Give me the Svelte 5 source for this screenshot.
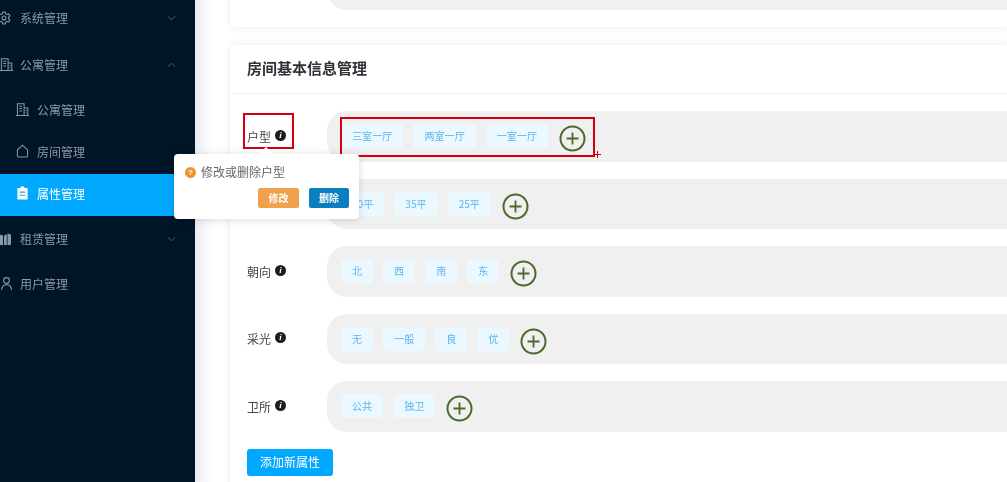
<script>
	const rows = [
		{ label: '户型', tags: ['三室一厅', '两室一厅', '一室一厅'] },
		{ label: '面积', tags: ['40平', '35平', '25平'] },
		{ label: '朝向', tags: ['北', '西', '南', '东'] },
		{ label: '采光', tags: ['无', '一般', '良', '优'] },
		{ label: '卫所', tags: ['公共', '独卫'] }
	]
</script>

{#snippet chevron(up)}
	<svg class="chev" viewBox="0 0 10 6" width="9" height="6" fill="none" stroke="currentColor" stroke-width="1">
		<path d={up ? 'M1 5l4-4 4 4' : 'M1 1l4 4 4-4'} />
	</svg>
{/snippet}

{#snippet building()}
	<svg class="ico" viewBox="0 0 14 14" width="13" height="13" fill="none" stroke="currentColor" stroke-width="1.100">
		<path d="M1.500 13.500V.8h7.200v12.700M8.700 5.500h4v8M0 13.500h14M3.500 3.500h3M3.500 6h3M3.500 8.500h3M10.300 8h1M10.300 10.500h1" />
	</svg>
{/snippet}

{#snippet addBtn()}
	<button class="add" aria-label="添加">
		<svg viewBox="0 0 27 27" width="27" height="27" fill="none" stroke="#4a6a2c">
			<circle cx="13.5" cy="13.5" r="12" stroke-width="2" />
			<path d="M13.5 7.5v12M7.5 13.5h12" stroke-width="1.8" />
		</svg>
	</button>
{/snippet}

<div class="page">
	<aside class="sidebar">
		<div class="item first">
			<svg class="ico gear" viewBox="0 0 14 14" width="14" height="14" fill="none" stroke="currentColor" stroke-width="1.100">
				<path d="M5.800 1h2.400l.4 1.700 1.400.8 1.700-.5 1.200 2-1.300 1.200v1.600l1.300 1.200-1.200 2-1.700-.5-1.400.8-.4 1.700H5.800l-.4-1.700-1.400-.8-1.700.5-1.200-2 1.300-1.200V6.200L1.100 5l1.200-2 1.700.5 1.400-.8z" />
				<circle cx="7" cy="7" r="2" />
			</svg>
			<span>系统管理</span>
			{@render chevron(false)}
		</div>
		<div class="item open">
			{@render building()}
			<span>公寓管理</span>
			{@render chevron(true)}
		</div>
		<div class="sub">
			{@render building()}
			<span>公寓管理</span>
		</div>
		<div class="sub">
			<svg class="ico" viewBox="0 0 14 14" width="13" height="14" fill="none" stroke="currentColor" stroke-width="1.100">
				<path d="M1.500 5.800L7 .8l5.500 5v6.700q0 1-1 1h-9q-1 0-1-1z" />
			</svg>
			<span>房间管理</span>
		</div>
		<div class="sub active">
			<svg class="ico" viewBox="0 0 14 14" width="13" height="14" fill="#fff">
				<path d="M5 0h4v1.500h3.500V14h-11V1.500H5zM4 5.500v1.200h6V5.500zM4 8.800V10h6V8.800z" fill-rule="evenodd" />
			</svg>
			<span>属性管理</span>
		</div>
		<div class="item">
			<svg class="ico rent" viewBox="0 0 11 12" width="11" height="12" fill="currentColor">
				<path d="M0 1.500l3 1V12H0zM4 2.500l2.800-1.200V12H4zM7.500 0.500L11 1.500V12H7.500z" />
			</svg>
			<span>租赁管理</span>
			{@render chevron(false)}
		</div>
		<div class="item">
			<svg class="ico user" viewBox="0 0 11 13" width="11" height="13" fill="none" stroke="currentColor" stroke-width="1.100">
				<circle cx="5.500" cy="3.500" r="2.900" />
				<path d="M.6 13c0-3.400 2-5.200 4.900-5.200s4.900 1.800 4.900 5.200" />
			</svg>
			<span>用户管理</span>
		</div>
	</aside>

	<div class="gutter"></div>

	<main class="main">
		<section class="card top">
			<div class="pill">
				<div class="spacer"></div>
				{@render addBtn()}
			</div>
		</section>

		<section class="card">
			<h2>房间基本信息管理</h2>
			<div class="body">
				{#each rows as row}
					<div class="row">
						<div class="label">
							<span>{row.label}</span>
							<i class="info">i</i>
						</div>
						<div class="pill">
							{#each row.tags as tag}
								<span class="tag">{tag}</span>
							{/each}
							{@render addBtn()}
						</div>
					</div>
				{/each}
				<button class="new">添加新属性</button>
			</div>
		</section>
	</main>

	<div class="mark mark-label"></div>
	<div class="mark mark-tags"></div>
	<div class="cross"></div>

	<div class="popover">
		<div class="arrow"></div>
		<p><i class="warn">?</i>修改或删除户型</p>
		<div class="actions">
			<button class="edit">修改</button>
			<button class="del">删除</button>
		</div>
	</div>
</div>

<style>
	:global(body) {
		margin: 0;
		overflow: hidden;
	}

	.page {
		position: relative;
		display: flex;
		width: 1007px;
		height: 482px;
		overflow: hidden;
		background: #fff;
		font-family: "Noto Sans CJK SC", "Liberation Sans", sans-serif;
		font-size: 12px;
		filter: blur(0.45px);
	}

	.sidebar {
		flex: none;
		width: 195px;
		background: #001528;
		color: #8d98a5;
	}

	.item {
		display: flex;
		align-items: center;
		height: 45px;
		padding-right: 19px;
	}

	.item.first {
		margin-top: -5px;
		margin-bottom: 2px;
	}

	.item.open {
		margin-bottom: 3px;
	}

	.item .ico {
		flex: none;
		margin-right: 7px;
	}

	.item .gear {
		margin: 0 9px 0 -3px;
	}

	.item .rent {
		margin-right: 9px;
	}

	.item .user {
		margin: 0 8px 0 1px;
	}

	.item span {
		flex: 1;
	}

	.chev {
		color: #5f6c7a;
	}

	.sub {
		display: flex;
		align-items: center;
		box-sizing: border-box;
		height: 42px;
		padding: 0 0 4px 16px;
	}

	.sub .ico {
		margin-right: 8px;
	}

	.sub.active {
		background: #00a8ff;
		color: #fff;
	}

	.gutter {
		flex: none;
		width: 17px;
		background: linear-gradient(90deg, #e9edf0, #f7f8f9 60%, #fbfcfc);
	}

	.main {
		flex: 1;
		min-width: 0;
		padding-left: 18px;
		background: #fff;
	}

	.card {
		border-radius: 3px;
		background: #fff;
		box-shadow: 0 0 8px rgba(0, 0, 0, 0.09);
	}

	.card.top {
		height: 87px;
		margin-top: -60px;
		margin-bottom: 18px;
		padding: 19px 0 0 97px;
		box-sizing: border-box;
	}

	.spacer {
		width: 328px;
		flex: none;
	}

	h2 {
		margin: 0;
		height: 48px;
		padding-left: 17px;
		border-bottom: 1px solid #eef0f2;
		font-size: 15px;
		font-weight: 700;
		line-height: 45px;
		color: #2f3338;
	}

	.body {
		display: flex;
		flex-direction: column;
		gap: 17px;
		padding: 17px 0 40px 17px;
	}

	.row {
		display: flex;
		align-items: center;
	}

	.label {
		display: flex;
		flex: none;
		align-items: center;
		width: 80px;
		color: #444;
	}

	.info {
		display: block;
		width: 11px;
		height: 11px;
		margin: -2px 0 0 4px;
		border-radius: 50%;
		background: #1d1d1d;
		color: #fff;
		font: italic 700 9px/11px "Liberation Serif", serif;
		text-align: center;
	}

	.pill {
		display: flex;
		flex: 1;
		align-items: flex-start;
		gap: 10px;
		box-sizing: border-box;
		height: 50.5px;
		padding: 13px 0 0 14px;
		border-radius: 20px 0 0 20px;
		background: #f0f0f0;
	}

	.tag {
		height: 24px;
		padding: 0 11px;
		border-radius: 3px;
		background: #ecf8ff;
		color: #5cb6ef;
		font-size: 10.1px;
		line-height: 23px;
	}

	.add {
		flex: none;
		width: 27px;
		height: 27px;
		margin: 1px 0 0 1px;
		padding: 0;
		border: 0;
		background: none;
	}

	.add svg {
		display: block;
	}

	.new {
		width: 86px;
		height: 27px;
		padding: 0 0 2px;
		border: 0;
		border-radius: 3px;
		background: #00a8ff;
		color: #fff;
		font: inherit;
	}

	.mark {
		position: absolute;
		box-sizing: border-box;
		border: 2px solid #d4000f;
	}

	.mark-label {
		left: 243px;
		top: 113px;
		width: 51px;
		height: 36px;
	}

	.mark-tags {
		left: 340px;
		top: 117px;
		width: 255px;
		height: 40px;
	}

	.cross {
		position: absolute;
		left: 594px;
		top: 154px;
		width: 7px;
		height: 1px;
		background: #d4000f;
	}

	.cross::after {
		content: '';
		position: absolute;
		left: 3px;
		top: -3px;
		width: 1px;
		height: 7px;
		background: #d4000f;
	}

	.popover {
		position: absolute;
		left: 174px;
		top: 154px;
		box-sizing: border-box;
		width: 185px;
		height: 65px;
		padding: 9px 10px 0 11px;
		border-radius: 4px;
		background: #fff;
		box-shadow: 0 1px 8px rgba(0, 0, 0, 0.15);
		color: #666;
	}

	.arrow {
		position: absolute;
		left: 87px;
		top: -5px;
		width: 10px;
		height: 10px;
		background: #fff;
		transform: rotate(45deg);
	}

	.popover p {
		position: relative;
		display: flex;
		align-items: center;
		margin: 0;
		line-height: 17px;
	}

	.warn {
		display: block;
		flex: none;
		width: 11px;
		height: 11px;
		margin: 1px 5px 0 0;
		border-radius: 50%;
		background: #f5932b;
		color: #fff;
		font: 700 8px/11px "Liberation Sans", sans-serif;
		text-align: center;
	}

	.actions {
		display: flex;
		justify-content: flex-end;
		gap: 10px;
		margin-top: 8px;
	}

	.actions button {
		width: 40px;
		height: 20px;
		padding: 0;
		border: 0;
		border-radius: 2px;
		color: #fff;
		font: 700 10px/20px "Noto Sans CJK SC", sans-serif;
	}

	.actions .edit {
		width: 41px;
		background: #f0a14e;
	}

	.del {
		background: #0a7fc0;
	}
</style>
